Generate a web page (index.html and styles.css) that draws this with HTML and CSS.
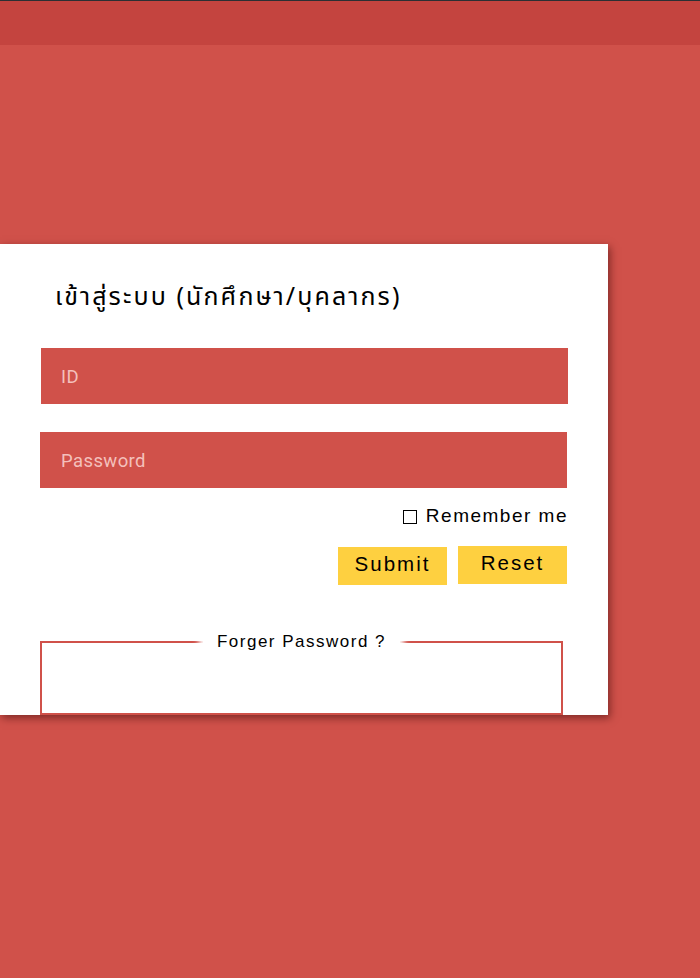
FILE: index.html
```html
<!DOCTYPE html>
<html lang="th">
<head>
<meta charset="utf-8">
<title>Login</title>
<link rel="stylesheet" href="styles.css">
</head>
<body>
<header class="topbar"></header>
<main class="stage">
  <section class="card">
    <h1 class="title">เข้าสู่ระบบ (นักศึกษา/บุคลากร)</h1>
    <div class="field field-id"><span class="ph">ID</span></div>
    <div class="field field-pw"><span class="ph">Password</span></div>
    <label class="remember"><span class="box"></span>Remember me</label>
    <div class="actions">
      <button class="btn btn-submit" type="button">Submit</button>
      <button class="btn btn-reset" type="button">Reset</button>
    </div>
    <fieldset class="forgot">
      <legend class="forgot-legend">Forger Password ?</legend>
    </fieldset>
  </section>
</main>
</body>
</html>
```

FILE: styles.css
```css
html, body {
  margin: 0;
  padding: 0;
}
body {
  background: #d0514a;
  width: 700px;
  height: 978px;
  overflow: hidden;
  font-family: "Liberation Sans", Arial, sans-serif;
}
.topbar {
  height: 44px;
  border-top: 1px solid #2b2f33;
  background: #c4443f;
}
.stage {
  padding-top: 199px;
}
.card {
  width: 608px;
  height: 471px;
  box-sizing: border-box;
  background: #fff;
  padding: 38px 0 0 40px;
  box-shadow: 2px 3px 8px rgba(60, 10, 10, 0.55);
  overflow: hidden;
}
.title {
  margin: 0 0 36px 15px;
  font-family: "Noto Sans Thai", "Noto Sans Thai UI", "Noto Sans", sans-serif;
  font-weight: 400;
  font-size: 25px;
  letter-spacing: 2.1px;
  line-height: 30px;
  color: #000;
}
.field {
  height: 56px;
  width: 528px;
  background: #d0514a;
  display: flex;
  align-items: center;
  box-sizing: border-box;
  padding-left: 21px;
}
.field-id {
  margin-left: 1px;
  width: 527px;
  padding-left: 20px;
}
.field-pw {
  margin-top: 28px;
  width: 527px;
}
.ph {
  font-family: Roboto, "Liberation Sans", sans-serif;
  font-size: 18.5px;
  color: #f4c0bc;
  letter-spacing: 0.4px;
  padding-top: 1px;
}
.remember {
  margin-top: 17px;
  width: 528px;
  display: flex;
  justify-content: flex-end;
  align-items: center;
  font-size: 19px;
  letter-spacing: 1.5px;
  line-height: 22px;
  color: #000;
}
.box {
  width: 12px;
  height: 12px;
  border: 1px solid #000;
  margin-right: 9px;
  margin-top: 1px;
}
.actions {
  margin-top: 19px;
  width: 527px;
  display: flex;
  justify-content: flex-end;
  align-items: flex-start;
  gap: 11px;
}
.btn {
  width: 109px;
  height: 38px;
  border: 0;
  padding: 0 0 4px 0;
  background: #fed040;
  font-family: "Liberation Sans", Arial, sans-serif;
  font-size: 20.5px;
  letter-spacing: 2px;
  color: #000;
}
.btn-submit {
  margin-top: 1px;
}
.forgot {
  margin: 47px 0 0 0;
  width: 523px;
  height: 83px;
  box-sizing: border-box;
  border: 2px solid #d0514a;
  padding: 0;
}
.forgot-legend {
  margin: 0 auto;
  padding: 0 14px;
  background: #fff;
  box-shadow: 0 0 6px 4px #fff;
  font-size: 17px;
  letter-spacing: 1.5px;
  color: #000;
}
```
